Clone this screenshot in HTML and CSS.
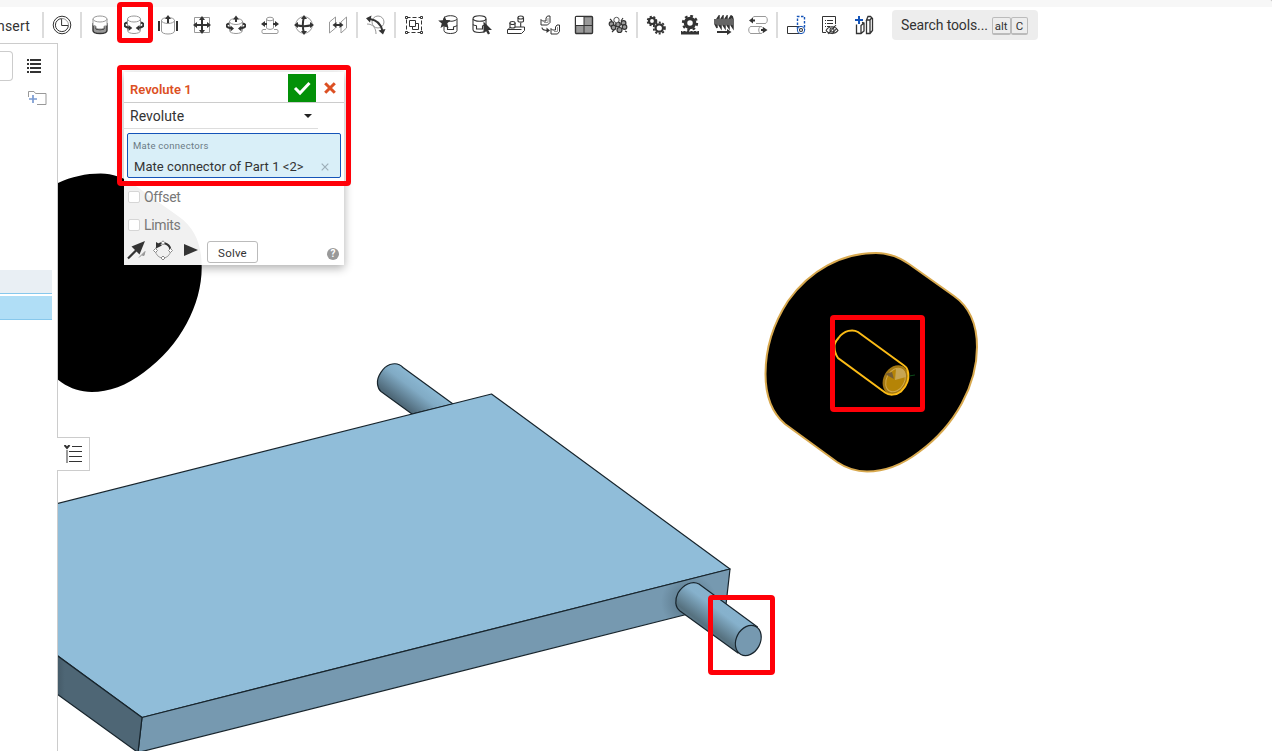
FILE: index.html
```html
<!DOCTYPE html>
<html lang="en">
<head>
<meta charset="utf-8">
<title>Assembly</title>
<link rel="stylesheet" href="styles.css">
</head>
<body>
<div class="app">
  <div class="strip"><span class="strip-knob"></span></div>
  <div class="toolbar">
    <div class="insert"><span>Insert</span></div>
    <i class="sep"></i>
    <div class="tool"><svg viewBox="0 0 20 20"><circle cx="10" cy="10" r="8.800" class="d"/><path d="M9.600 3.600A6.500 6.500 0 1 0 16.400 10.500H9.600Z" class="d"/><path d="M9.600 3.400a7 7 0 0 1 7 7" class="g"/></svg></div>
    <i class="sep"></i>
    <div class="tool"><svg viewBox="0 0 20 20"><path d="M3 9v6.500c0 4 14 4 14 0V9l-3 1v3c0 2-8 2-8 0v-3Z" fill="#999" stroke="#333" stroke-width="1.400"/><path d="M3 4v6c0 .8 3 1.200 3 1.200v1.300c0 2 8 2 8 0v-1.300s3-.4 3-1.200V4" fill="#fff" stroke="#999"/><ellipse cx="10" cy="4" rx="7" ry="3" fill="#fff" stroke="#999"/></svg></div>
    <div class="tool"><svg viewBox="0 0 20 20"><path d="M3.500 4v11.500c0 4 13 4 13 0V4" class="g"/><ellipse cx="10" cy="4" rx="6.500" ry="3" class="g"/><path d="M3 7.500C-1 9-.5 12 5 12.800M17 7.500C21 9 20.500 12 15 12.800" class="d bold"/><path d="M4.500 10 8.300 13l-3.800 3ZM15.500 10l-3.800 3 3.800 3Z" class="f"/></svg></div>
    <div class="tool"><svg viewBox="0 0 20 20"><path d="M3.500 5v11c0 4 13 4 13 0V5" class="g"/><ellipse cx="10" cy="5.500" rx="6.500" ry="3" class="g"/><path d="M10 8V3M1 6v10M19 6v10" class="d bold"/><path d="m7 4 3-4 3 4Z" class="f"/></svg></div>
    <div class="tool"><svg viewBox="0 0 20 20"><path d="M2.500 2.500h15v15h-15Z" class="g"/><path d="M10 3v14M3 10h14" class="d bold"/><path d="m7 5 3-4 3 4ZM7 15l3 4 3-4ZM5 7l-4 3 4 3ZM15 7l4 3-4 3Z" class="f"/></svg></div>
    <div class="tool"><svg viewBox="0 0 20 20"><path d="M3.500 6v9.500c0 4 13 4 13 0V6" class="g"/><ellipse cx="10" cy="6.500" rx="6.500" ry="3" class="g"/><path d="M3 8.500C-1 10-.5 12.500 5 13.300M17 8.500C21 10 20.500 12.500 15 13.300M10 7V3" class="d bold"/><path d="M4.500 10.500 8 13.500l-3.500 3ZM15.500 10.500 12 13.500l3.500 3ZM7 4.500l3-4 3 4Z" class="f"/></svg></div>
    <div class="tool"><svg viewBox="0 0 20 20"><path d="M6.500 4v9M13.500 4v9M6 12.500c2 2.500 6 2.500 8 0M6 14.500H3c-1.500 0-1.500 4 0 4h14c1.500 0 1.500-4 0-4h-3" class="g"/><ellipse cx="10" cy="4" rx="3.500" ry="1.800" class="g"/><path d="M3 9h4M13 9h4" class="d bold"/><path d="M5 6 1 9l4 3ZM15 6l4 3-4 3Z" class="f"/></svg></div>
    <div class="tool"><svg viewBox="0 0 20 20"><circle cx="10" cy="10" r="8.300" class="g"/><path d="M10 2c-1.500 5-1.500 11 0 16M2 10c5 1.500 11 1.500 16 0" class="d bold"/><path d="m7 4 3-4 3 4ZM7 16l3 4 3-4ZM4 7l-4 3 4 3ZM16 7l4 3-4 3Z" class="f"/></svg></div>
    <div class="tool"><svg viewBox="0 0 20 20"><path d="M1.500 7v11l6-5V2ZM13 7v11l5.500-5V2Z" class="g"/><path d="M7 10h6" class="d bold"/><path d="m8.500 7-4 3 4 3ZM11.500 7l4 3-4 3Z" class="f"/></svg></div>
    <i class="sep"></i>
    <div class="tool"><svg viewBox="0 0 20 20"><circle cx="12" cy="7" r="6" class="g"/><path d="M1 9c6 0 9 4 9 10" class="g"/><path d="M4 4c7 1 11 5 12.500 12" class="d bold"/><path d="M5.500.5 0 3.200 4 7.500ZM12.500 15.500l4.500 4 2.500-5.500Z" class="f"/></svg></div>
    <i class="sep"></i>
    <div class="tool"><svg viewBox="0 0 20 20"><path d="M2.500 2.500h15v15h-15Z" class="d" stroke-dasharray="4 2"/><path d="M1.500 1.500h2v2h-2ZM16.500 1.500h2v2h-2ZM1.500 16.500h2v2h-2ZM16.500 16.500h2v2h-2ZM8.500 8.500h6v6h-6Z" class="d w"/><path d="M5.500 5.500h6v6h-6Z" class="d w"/></svg></div>
    <div class="tool"><svg viewBox="0 0 20 20"><path d="M6 4v11.500c0 4 13 4 13 0V4" class="d"/><ellipse cx="12.500" cy="3.500" rx="6.500" ry="2.800" class="d w"/><path d="M6 10.500c1 1 3 1 3.500 1.500v2.500h6V12c1-.3 3-.7 3.500-1.500" class="d thin"/><path d="m6.500 1 1.700 4 4.500.3-3.400 2.900L10.500 13 6.500 10.500 2.500 13l1.300-4.600L.2 5.500l4.600-.3Z" class="f"/></svg></div>
    <div class="tool"><svg viewBox="0 0 20 20"><path d="M1 4v10.500c0 4 13 4 13 0V4" class="d thin"/><ellipse cx="7.500" cy="3.500" rx="6.500" ry="2.800" class="d w thin"/><path d="M1 9.500C2 11 4.500 10 4.500 11v3h6v-3c1-.3 3-.7 3.500-1.500" class="d thin"/><path d="M11.500 6.500v11.500l2.500-2 2 3.500 2-1-1.700-3.500H20Z" class="f"/></svg></div>
    <div class="tool"><svg viewBox="0 0 20 20"><path d="m1.500 15 3-3h14v3.500l-3 3h-14ZM1.500 14.500h14" class="d w"/><path d="M4 8v4c0 1.300 5 1.300 5 0V8M12 2.500v3.500c0 1.500 5.500 1.500 5.500 0V2.500M14.700 8v4" class="d w thin"/><ellipse cx="6.500" cy="8" rx="2.600" ry="1.500" class="d w thin"/><ellipse cx="14.700" cy="2.500" rx="2.700" ry="1.500" class="d w thin"/></svg></div>
    <div class="tool"><svg viewBox="0 0 20 20"><path d="M1 4.500V10h6.500L10 7.500V1H7.500L6 3v3H2.500ZM11 13.500V19h6.500l2-2.500V10H17l-1.500 2v3h-3Z" class="d w"/><path d="M8 3v4.500H4M17.500 12v4.500H14" class="g"/><path d="M2 12.500c0 2.500 2 3 6 3" class="d thin"/><path d="m6.500 12.500 3.500 3-3.500 2.500Z" class="f"/></svg></div>
    <div class="tool"><svg viewBox="0 0 20 20"><rect x="1.500" y="1.500" width="17" height="17" rx="1" fill="#999" stroke="#333" stroke-width="1.400"/><path d="M2 2h8v8H2Z" fill="#fff"/><path d="M10 2v17M2 10.500h17" class="d"/></svg></div>
    <div class="tool"><svg viewBox="0 0 20 20"><path d="m2 4 2 2M15 3l-2 3M17 16l2 1M4 17l2-2" class="d thin"/><g fill="#999" stroke="#333" stroke-width="1.200"><circle cx="3.500" cy="9" r="2.300"/><circle cx="5.500" cy="12.500" r="2.300"/><circle cx="10" cy="9.500" r="2.300"/><circle cx="11.500" cy="15" r="2.500"/><circle cx="15.500" cy="8" r="2.400"/><circle cx="16.500" cy="12" r="2.300"/></g><circle cx="8.500" cy="5" r="2.700" fill="#fff" stroke="#555"/></svg></div>
    <i class="sep"></i>
    <div class="tool"><svg viewBox="0 0 20 20"><circle cx="6" cy="6" r="3" class="d gear"/><circle cx="6" cy="6" r="4.400" class="d teeth"/><circle cx="13.300" cy="13" r="3.700" class="d gear"/><circle cx="13.300" cy="13" r="5.600" class="d teeth"/></svg></div>
    <div class="tool"><svg viewBox="0 0 20 20"><circle cx="10" cy="8" r="4.500" class="d" stroke-width="3.500"/><circle cx="10" cy="8" r="7" class="d" stroke-width="2.300" stroke-dasharray="2.750 2.750"/><path d="M1 16h18v3.500H1Z" class="f"/><path d="M2 16h16" stroke="#fff" stroke-dasharray="1.500 2"/></svg></div>
    <div class="tool"><svg viewBox="0 0 20 20"><path d="M1 4v5l2 4V4l2-3v9l2 3V4l2-3v9l2 3V4l2-3v9l2 3V4l2-3v9l2 3V4l-1-3" class="d" stroke-width="1.500"/><path d="M3 17h11" class="d bold"/><path d="m13 14 4.500 3-4.500 3Z" class="f"/></svg></div>
    <div class="tool"><svg viewBox="0 0 20 20"><path d="M6 1.500h11c3 0 3 7 0 7H8M7 1.500c-3 0-3 3-2 3M13 11.500H3c-3 0-3 7 0 7h10c3 0 3-7 0-7s-3 7 0 7" class="g"/><path d="M3 5.500h4M13 15h4" class="d bold"/><path d="M5 2.500 1 5.500l4 3ZM15 12l4.500 3-4.500 3Z" class="f"/></svg></div>
    <i class="sep"></i>
    <div class="tool"><svg viewBox="0 0 20 20"><path d="M15 11.500H1.500v7H15" class="d"/><path d="M11.500 14V1.500h7V15" class="b" stroke-dasharray="2.500 1.500"/><circle cx="15" cy="15" r="3.700" fill="#fff" stroke="#1554b8"/><circle cx="15" cy="15" r="1.500" class="d thin"/></svg></div>
    <div class="tool"><svg viewBox="0 0 20 20"><path d="M15.500 9V1.500h-13v16H6M5 5.500h1M5 8.500h1M5 11.500h1M7 5.500h6M7 8.500h6M7 11.500h3" class="d"/><path d="M6 15.500c3-5 9-5 12 0-3 4-9 4-12 0M8 19l8-9M12 19l5-6" class="d thin"/><circle cx="12" cy="15" r="2" class="d thin"/></svg></div>
    <div class="tool"><svg viewBox="0 0 20 20"><path d="M2.500 9.500v9h4.500l3-2.500V8L8 7.500M7 18.500v-8l3-2.500M12.500 5v13.500h3.500l2.500-3V3.500L16.500 1.500H14L12.500 5h3.500v13.500M16 5l2-2.500" class="d" stroke-width="1.300"/><path d="M5 1v8M1 5h8" class="b bold"/></svg></div>
    <button class="search">Search tools...<kbd>alt</kbd><kbd>C</kbd></button>
  </div>

  <div class="work">
    <aside class="side">
      <div class="side-top"><span class="filter"></span>
        <svg class="list" viewBox="0 0 14 14"><path d="M0 1h2M0 5h2M0 9h2M0 13h2M3 1h11M3 5h11M3 9h11M3 13h11" class="d" stroke-width="2"/></svg>
      </div>
      <svg class="folder" viewBox="0 0 19 16"><path d="M.5 7V1.500h5.500l1.500 2h10.500v11H9" class="g"/><path d="M5 5v8M1 9h8" stroke="#7a9bd2" stroke-width="1.700"/></svg>
      <div class="row hover"></div>
      <div class="row picked"></div>
    </aside>

    <main class="canvas">
      <svg class="scene" viewBox="58 43 1214 708">
        <defs>
          <linearGradient id="rodBack" gradientUnits="userSpaceOnUse" x1="428" y1="384" x2="402" y2="418"><stop offset="0" stop-color="#8cb9d4"/><stop offset=".3" stop-color="#81abc5"/><stop offset=".75" stop-color="#4f6979"/><stop offset="1" stop-color="#5b788a"/></linearGradient>
          <linearGradient id="rodFront" gradientUnits="userSpaceOnUse" x1="730" y1="604" x2="706" y2="636"><stop offset="0" stop-color="#87b2cd"/><stop offset=".3" stop-color="#86b1cc"/><stop offset=".8" stop-color="#56717f"/><stop offset="1" stop-color="#648398"/></linearGradient>
          <linearGradient id="edgeShade" x1="0" x2="1"><stop offset="0" stop-color="#3c4f5b"/><stop offset=".16" stop-color="#4e6675"/></linearGradient>
          <radialGradient id="contact" gradientUnits="userSpaceOnUse" cx="689" cy="602" r="28"><stop offset=".3" stop-color="#5d7b8e"/><stop offset="1" stop-color="#7699b0"/></radialGradient>
          <path id="wheel" d="M876 253C888 253 899 257 909 264L954 296C971 308 977 325 977 347C977 384 956 425 919 452C902 465 884 471.500 867 471.500C856 471.500 846 468 837 462L785 424C771 412 765.500 396 765.500 374C765.500 350 773 324 788 301C810 270 842 253 876 253Z"/>
        </defs>
        <use href="#wheel" x="-775.300" y="-79.500"/>
        <use href="#wheel" stroke="#d8a94f" stroke-width="2"/>
        <ellipse cx="895.500" cy="380" rx="12" ry="15.500" transform="rotate(28 895.500 380)" fill="#a27712"/>
        <path class="glow" d="M834.500 347Q834.500 353 838 358L885 392.500C889 395.500 896 395.500 901 391.500C907 386 910 378 907.500 370Q907 367.500 904 365.500L858 332C853 329 844 330 838.500 338Q834 343 834.500 347"/>
        <ellipse cx="895.500" cy="380" rx="9" ry="12.500" transform="rotate(28 895.500 380)" fill="#b58406" stroke="#d0a84b"/>
        <path d="M896 369 895 380 906 377C906 370 902 367 896 369Z" fill="#c7a552"/>
        <path d="m885 374 9 5-2-7" fill="#755d35"/><path d="m909 376 6-1" stroke="#0b4b19"/>
        <g class="edges">
          <path d="M453 404 403 367.500C399 363 395 363 390 364.500C383 367 376.500 377 377.500 384Q378 389 381 391.500L412 414Z" fill="url(#rodBack)"/>
          <path d="M50 505.500 491.500 394 730 569 142 717.500 50 650Z" fill="#90bdd9"/>
          <path d="M142 717.500 730 569 726 604.500 138 752.500Z" fill="url(#contact)"/>
          <path d="M50 650.500 142 717.500 138 752.500 50 689Z" fill="url(#edgeShade)"/>
          <path d="M680 611C675 607 674.500 600 678 593C683 585 692 580 699 584L757.500 627 738 653Z" fill="url(#rodFront)"/>
          <ellipse cx="748.300" cy="640.500" rx="12" ry="15.800" transform="rotate(28 748.300 640.500)" fill="#7699b0"/>
        </g>
      </svg>

      <div class="tab"><svg viewBox="0 0 18 18"><path d="M8 1.500h10M5 6.500h13M5 11.500h13M5 16.500h13" class="d"/><path d="M3 5v13" stroke="#999" stroke-width="2"/><path d="M.5 0 3 3 5.500 0" class="d" stroke-width="2"/></svg></div>

      <section class="dialog">
        <header class="head"><h1>Revolute 1</h1>
          <span class="ok"><svg viewBox="0 0 28 28"><path d="m7 14 5 5 9.500-10" fill="none" stroke="#fff" stroke-width="3"/></svg></span>
          <svg class="close" viewBox="0 0 12 12"><path d="m1.200 1.200 9.600 9.600M10.800 1.200 1.200 10.800" stroke="#dc5023" stroke-width="3"/></svg>
        </header>
        <div class="kind"><span>Revolute</span><i class="caret"></i></div>
        <div class="field"><small>Mate connectors</small>
          <div class="pick"><span>Mate connector of Part 1 &lt;2&gt;</span><svg viewBox="0 0 8 8"><path d="m.7.700 6.600 6.600M7.300.700.7 7.300" stroke="#9daeb8" stroke-width="1.200" fill="none"/></svg></div>
        </div>
        <label class="check"><i></i><span>Offset</span></label>
        <label class="check"><i></i><span>Limits</span></label>
        <footer class="foot">
          <svg class="arrow" viewBox="0 0 20 20"><path d="m1 18.500 9-9" class="d" stroke-width="2.200"/><path d="M18 1 4.500 6.500l8 8Z" class="f"/><path d="m12 17.500 3-3 3-3-1 4-2-.5" fill="#999" stroke="#999"/></svg>
          <svg class="orbit" viewBox="0 0 20 20"><circle cx="10" cy="10.500" r="7.500" class="g"/><path d="M5 5a7.500 7.500 0 0 1 12.300 4" class="d bold"/><path d="M3 2v6.500l6-3Z" class="f"/><path d="m10 .800 2 2-2 2-2-2ZM10 16l2 2-2 2-2-2ZM2.500 8.500l2 2-2 2-2-2ZM17.500 8.500l2 2-2 2-2-2Z" fill="#fff" stroke="#888"/></svg>
          <i class="play"></i>
          <button class="solve">Solve</button>
          <span class="help">?</span>
        </footer>
      </section>
    </main>
  </div>

  <div class="mark mark-tool"></div>
  <div class="mark mark-dialog"></div>
  <div class="mark mark-hole"></div>
  <div class="mark mark-rod"></div>
</div>
</body>
</html>
```
FILE: styles.css
```css
* { box-sizing: border-box; }
body { margin: 0; overflow: hidden; background: #fff; color: #333; font: 14px Roboto, "Liberation Sans", sans-serif; }
svg { display: block; }
button { font: inherit; color: inherit; }
.app { position: relative; width: 1272px; height: 751px; display: flex; flex-direction: column; overflow: hidden; }
.strip { height: 7px; background: #f7f7f7; display: flex; justify-content: flex-end; overflow: hidden; }
.strip-knob { width: 14px; height: 14px; margin: -11px -11px 0 0; border: 1px solid #bbb; border-radius: 7px; background: #fff; }

.toolbar { height: 36px; display: flex; align-items: center; }
.insert { width: 41px; display: flex; justify-content: flex-end; padding: 2px 11px 0 0; overflow: hidden; letter-spacing: .2px; }
.sep { width: 2px; height: 26px; margin: 0 1px; background: #dcdcdc; }
.tool { width: 34px; height: 36px; display: flex; align-items: center; justify-content: center; }
.tool svg { width: 20px; height: 20px; }
.search { width: 146px; height: 30px; margin: 0 0 0 11px; padding: 0 0 0 9px; border: 0; border-radius: 4px; background: #ededed; display: flex; align-items: center; letter-spacing: -.12px; }
.search kbd { height: 18px; margin-top: 2px; padding: 1px 2px 0; border: 1px solid #bbb; border-bottom-width: 2px; border-radius: 2px; font: 11.5px/15px Roboto, sans-serif; letter-spacing: 0; }
.search kbd:first-of-type { margin-left: 4px; }
.search kbd + kbd { padding: 1px 4px 0; }

.d { fill: none; stroke: #333; }
.thin { stroke-width: 1.1; }
.g { fill: none; stroke: #999; }
.b { fill: none; stroke: #1554b8; stroke-width: 1.4; }
.f { fill: #333; }
.w { fill: #fff; }
.bold { stroke-width: 2; }
.gear { stroke-width: 2.2; }
.teeth { stroke-width: 1.8; stroke-dasharray: 2 1.6; }

.work { flex: 1; display: flex; min-height: 0; }
.side { width: 58px; border-top: 1px solid #ccc; border-right: 1px solid #ccc; display: flex; flex-direction: column; }
.side-top { height: 37px; display: flex; padding-top: 7px; }
.filter { width: 13px; height: 30px; border: 1px solid #ccc; border-left: 0; border-radius: 0 4px 4px 0; }
.list { width: 14px; height: 14px; margin: 8px 0 0 14px; }
.folder { width: 19px; height: 16px; margin: 9px 0 0 28px; }
.row { width: 52px; height: 24px; border-bottom: 1px solid #87c8ec; }
.hover { margin-top: 164px; background: #e9eff4; }
.picked { margin-top: 2px; background: #b0def6; }

.canvas { position: relative; flex: 1; }
.scene { width: 1214px; height: 708px; }
.edges { stroke: #17242c; stroke-width: 1.2; stroke-linejoin: round; }
.glow { fill: none; stroke: #fcbc16; stroke-width: 2; }
.tab { position: absolute; left: -1px; top: 394px; width: 33px; height: 34px; padding: 7px 0 0 7px; border: 1px solid #ccc; border-left: 0; background: #fff; }
.tab svg { width: 18px; height: 18px; }

.dialog { position: absolute; left: 66px; top: 29px; width: 220px; height: 193px; background: rgba(255, 255, 255, .945); box-shadow: 0 3px 9px rgba(0, 0, 0, .32); display: flex; flex-direction: column; }
.head { height: 31px; border-bottom: 1px solid #ccc; display: flex; align-items: center; padding: 1px 8px 0 6px; }
.head h1 { flex: 1; margin: 3px 0 0; font-size: 13px; font-weight: 600; color: #dc5023; letter-spacing: 0; }
.ok { width: 28px; height: 28px; background: #039108; margin-right: 8px; }
.close { width: 12px; height: 12px; }
.kind { width: 194px; height: 26px; border-bottom: 1px solid #ddd; display: flex; align-items: center; justify-content: space-between; padding: 0 6px; letter-spacing: .05px; }
.caret { margin-top: 1px; border: 4px solid transparent; border-top-color: #222; border-bottom: 0; }
.field { width: 214px; height: 45px; margin: 4px 0 0 3px; padding: 6px 11px 0 6px; border: 1px solid #1554b8; border-radius: 2px; background: #d9eff8; display: flex; flex-direction: column; }
.field small { margin-left: -1px; font-size: 9.5px; line-height: 12px; color: #6b7b85; letter-spacing: .28px; }
.pick { display: flex; align-items: center; justify-content: space-between; margin-top: 6px; line-height: 17px; font-size: 13px; letter-spacing: .06px; white-space: nowrap; }
.pick svg { width: 8px; height: 8px; }
.check { height: 28px; display: flex; align-items: center; gap: 4px; padding-left: 4px; color: #777; letter-spacing: -.35px; }
.check:first-of-type { margin-top: 5px; }
.check i { width: 12px; height: 12px; border: 1px solid #d6d6d6; border-radius: 2px; background: #fff; }
.foot { display: flex; align-items: center; height: 24px; padding: 0 4px 0 3px; }
.arrow, .orbit { width: 20px; height: 20px; margin-top: -3px; }
.orbit { margin-left: 6px; }
.play { margin: -2px 0 0 11px; border-style: solid; border-width: 6.5px 0 6.5px 14px; border-color: transparent transparent transparent #333; }
.solve { width: 51px; height: 22px; margin: 2px 0 0 9px; padding: 1px 0 0; border: 1px solid #bbb; border-radius: 3px; background: #fff; font-size: 11.5px; letter-spacing: .2px; }
.help { width: 12px; height: 12px; margin: 5px 1px 0 auto; border-radius: 6px; background: #999; color: #fff; font: bold 10px/12px Roboto, sans-serif; text-align: center; }

.mark { position: absolute; border: 5px solid #ff0008; border-radius: 4px; }
.mark-tool { left: 117px; top: 2px; width: 36px; height: 41px; }
.mark-dialog { left: 117px; top: 65px; width: 234px; height: 121px; }
.mark-hole { left: 830px; top: 315px; width: 95px; height: 97px; }
.mark-rod { left: 708px; top: 595px; width: 67px; height: 80px; }
```
